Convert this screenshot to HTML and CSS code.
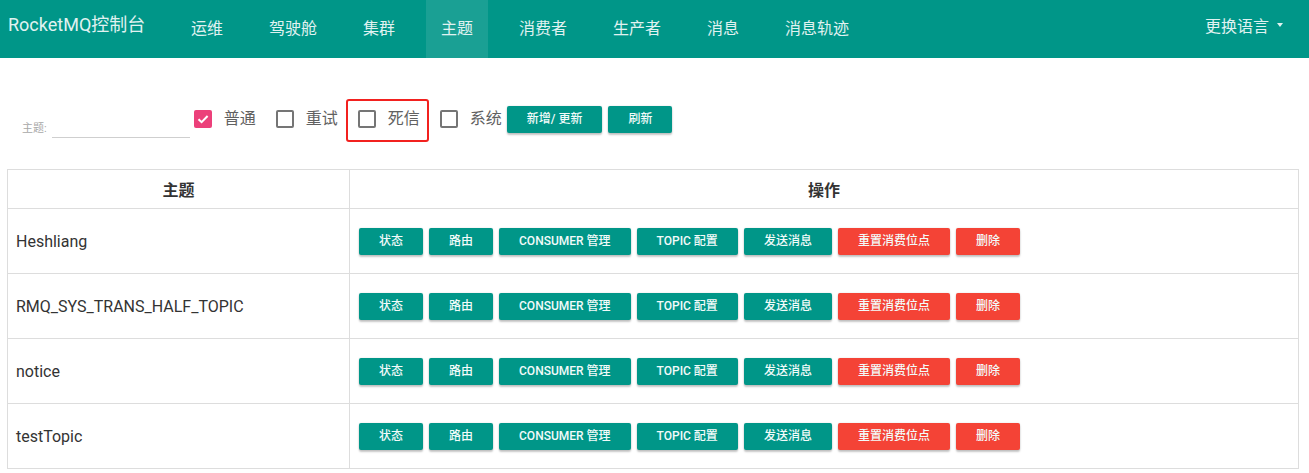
FILE: index.html
```html
<!DOCTYPE html>
<html lang="zh-CN">
<head>
<meta charset="utf-8">
<title>RocketMQ控制台</title>
<link rel="stylesheet" href="styles.css">
</head>
<body>
<header class="navbar">
  <div class="brand">RocketMQ控制台</div>
  <ul class="nav">
    <li><a>运维</a></li>
    <li><a>驾驶舱</a></li>
    <li><a>集群</a></li>
    <li class="active"><a>主题</a></li>
    <li><a>消费者</a></li>
    <li><a>生产者</a></li>
    <li><a>消息</a></li>
    <li><a>消息轨迹</a></li>
  </ul>
  <div class="lang">更换语言<span class="caret"></span></div>
</header>

<main class="content">
  <div class="filters">
    <div class="field">
      <label class="field-label">主题:</label>
      <span class="field-input"></span>
    </div>
    <div class="check-item">
      <span class="box checked"><svg viewBox="0 0 18 18" width="18" height="18"><path d="M4.5 9.2 L7.6 12.2 L13.6 6" fill="none" stroke="#fff" stroke-width="2"/></svg></span>
      <span class="check-label">普通</span>
    </div>
    <div class="check-item">
      <span class="box"></span>
      <span class="check-label">重试</span>
    </div>
    <div class="check-item annotated">
      <span class="box"></span>
      <span class="check-label">死信</span>
    </div>
    <div class="check-item last">
      <span class="box"></span>
      <span class="check-label">系统</span>
    </div>
    <button class="btn btn-primary btn-filter first">新增/ 更新</button>
    <button class="btn btn-primary btn-filter">刷新</button>
  </div>

  <table class="topics">
    <thead>
      <tr><th class="col-topic">主题</th><th>操作</th></tr>
    </thead>
    <tbody>
      <tr>
        <td class="topic-name">Heshliang</td>
        <td class="actions">
          <button class="btn btn-primary">状态</button><button class="btn btn-primary">路由</button><button class="btn btn-primary">CONSUMER 管理</button><button class="btn btn-primary">TOPIC 配置</button><button class="btn btn-primary">发送消息</button><button class="btn btn-danger">重置消费位点</button><button class="btn btn-danger">删除</button>
        </td>
      </tr>
      <tr>
        <td class="topic-name">RMQ_SYS_TRANS_HALF_TOPIC</td>
        <td class="actions">
          <button class="btn btn-primary">状态</button><button class="btn btn-primary">路由</button><button class="btn btn-primary">CONSUMER 管理</button><button class="btn btn-primary">TOPIC 配置</button><button class="btn btn-primary">发送消息</button><button class="btn btn-danger">重置消费位点</button><button class="btn btn-danger">删除</button>
        </td>
      </tr>
      <tr>
        <td class="topic-name">notice</td>
        <td class="actions">
          <button class="btn btn-primary">状态</button><button class="btn btn-primary">路由</button><button class="btn btn-primary">CONSUMER 管理</button><button class="btn btn-primary">TOPIC 配置</button><button class="btn btn-primary">发送消息</button><button class="btn btn-danger">重置消费位点</button><button class="btn btn-danger">删除</button>
        </td>
      </tr>
      <tr>
        <td class="topic-name">testTopic</td>
        <td class="actions">
          <button class="btn btn-primary">状态</button><button class="btn btn-primary">路由</button><button class="btn btn-primary">CONSUMER 管理</button><button class="btn btn-primary">TOPIC 配置</button><button class="btn btn-primary">发送消息</button><button class="btn btn-danger">重置消费位点</button><button class="btn btn-danger">删除</button>
        </td>
      </tr>
    </tbody>
  </table>
</main>
</body>
</html>
```

FILE: styles.css
```css
* { box-sizing: border-box; }

body {
  margin: 0;
  font-family: Roboto, "Noto Sans CJK SC", sans-serif;
  color: #333;
  background: #fff;
}

/* ---------- navbar ---------- */
.navbar {
  display: flex;
  align-items: flex-start;
  height: 58px;
  background: #009688;
  color: #e0f2f1;
}

.brand {
  width: 176px;
  padding-left: 8px;
  font-size: 18px;
  line-height: 50px;
  white-space: nowrap;
}

.nav {
  display: flex;
  gap: 16px;
  margin: 0;
  padding: 0;
  list-style: none;
}

.nav li a {
  display: block;
  padding: 0 15px;
  font-size: 16px;
  line-height: 58px;
  height: 58px;
}

.nav li.active {
  background: rgba(255, 255, 255, 0.1);
}

.lang {
  display: flex;
  align-items: center;
  margin-left: auto;
  padding-right: 26px;
  height: 50px;
  font-size: 16px;
}

.caret {
  width: 0;
  height: 0;
  margin-left: 8px;
  border-top: 4px solid #e0f2f1;
  border-left: 3.5px solid transparent;
  border-right: 3.5px solid transparent;
}

/* ---------- filters ---------- */
.content {
  padding: 41px 10px 0 7px;
}

.filters {
  display: flex;
  align-items: center;
  height: 40px;
  padding-left: 15px;
}

.field {
  display: flex;
  align-items: flex-end;
  height: 38px;
  align-self: flex-start;
  margin-top: 1px;
  margin-right: 4px;
}

.field-label {
  font-size: 11px;
  line-height: 12px;
  color: #a8a8a8;
  margin-bottom: 3px;
}

.field-input {
  display: block;
  width: 138px;
  height: 24px;
  margin-left: 5px;
  border-bottom: 1px solid #cfcfcf;
}

.check-item {
  position: relative;
  display: flex;
  align-items: center;
  height: 20px;
  margin-right: 20px;
}

.check-item.last { margin-right: 0; }

.box {
  display: block;
  width: 18px;
  height: 18px;
  border: 2px solid #757575;
  border-radius: 2px;
}

.box.checked {
  border: none;
  background: #ec407a;
}

.box svg { display: block; }

.check-label {
  margin-left: 12px;
  font-size: 16px;
  line-height: 20px;
  color: #616161;
}

.annotated::after {
  content: "";
  position: absolute;
  left: -12px;
  right: -9px;
  top: -10px;
  bottom: -13px;
  border: 2.5px solid #f2211f;
  border-radius: 3px;
}

/* ---------- buttons ---------- */
.btn {
  display: inline-block;
  height: 27px;
  padding: 0 20px;
  border: none;
  border-radius: 2px;
  font-family: Roboto, "Noto Sans CJK SC", sans-serif;
  font-size: 12px;
  font-weight: 500;
  line-height: 27px;
  color: #f2fbfa;
  white-space: nowrap;
  box-shadow: 0 2px 2px rgba(0, 0, 0, 0.22), 0 0 2px rgba(0, 0, 0, 0.12);
  cursor: pointer;
}

.btn-primary { background: #009688; }
.btn-danger { background: #f44336; }

.btn-filter { margin-left: 6px; }
.btn-filter.first { margin-left: 5px; }

/* ---------- table ---------- */
.topics {
  width: 100%;
  margin-top: 30px;
  border-collapse: collapse;
  border: 1px solid #ddd;
}

.topics th,
.topics td {
  border: 1px solid #ddd;
}

.topics th {
  height: 39px;
  font-size: 16px;
  font-weight: bold;
  text-align: center;
  color: #333;
  padding: 0;
}

.col-topic { width: 342px; }

.topics td {
  height: 65px;
  padding: 0 0 0 9px;
  vertical-align: middle;
}

.topics td.topic-name {
  padding-left: 8px;
  font-size: 16px;
  color: #333;
}

.actions {
  font-size: 0;
}

.actions .btn {
  margin-right: 6px;
}
```
